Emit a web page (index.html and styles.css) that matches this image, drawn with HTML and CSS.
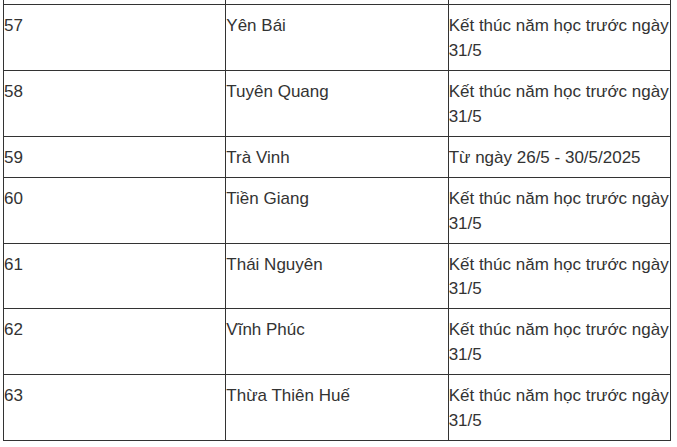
FILE: index.html
```html
<!DOCTYPE html>
<html lang="vi">
<head>
<meta charset="utf-8">
<title>Lịch kết thúc năm học</title>
<link rel="stylesheet" href="styles.css">
</head>
<body>
<table class="schedule">
  <colgroup><col class="c1"><col class="c2"><col class="c3"></colgroup>
  <tbody>
    <tr class="tail"><td></td><td></td><td></td></tr>
    <tr><td>57</td><td>Yên Bái</td><td>Kết thúc năm học trước ngày 31/5</td></tr>
    <tr><td>58</td><td>Tuyên Quang</td><td>Kết thúc năm học trước ngày 31/5</td></tr>
    <tr><td>59</td><td>Trà Vinh</td><td>Từ ngày 26/5 - 30/5/2025</td></tr>
    <tr><td>60</td><td>Tiền Giang</td><td>Kết thúc năm học trước ngày 31/5</td></tr>
    <tr><td>61</td><td>Thái Nguyên</td><td>Kết thúc năm học trước ngày 31/5</td></tr>
    <tr><td>62</td><td>Vĩnh Phúc</td><td>Kết thúc năm học trước ngày 31/5</td></tr>
    <tr><td>63</td><td>Thừa Thiên Huế</td><td>Kết thúc năm học trước ngày 31/5</td></tr>
  </tbody>
</table>
</body>
</html>
```
FILE: styles.css
```css
html, body {
  margin: 0;
  padding: 0;
  background: #ffffff;
}
.schedule {
  margin: 0 0 0 3px;
  width: 668px;
  table-layout: fixed;
  border-collapse: collapse;
  font-family: "Liberation Sans", Arial, sans-serif;
  font-size: 17px;
  line-height: 24.83px;
  color: #333333;
}
.schedule td {
  border: 1px solid #333333;
  padding: 9px 0 6.2px;
  vertical-align: top;
  text-align: left;
}
.schedule .tail td {
  border-top: none;
  padding: 0;
  height: 4px;
  line-height: 0;
}
```
